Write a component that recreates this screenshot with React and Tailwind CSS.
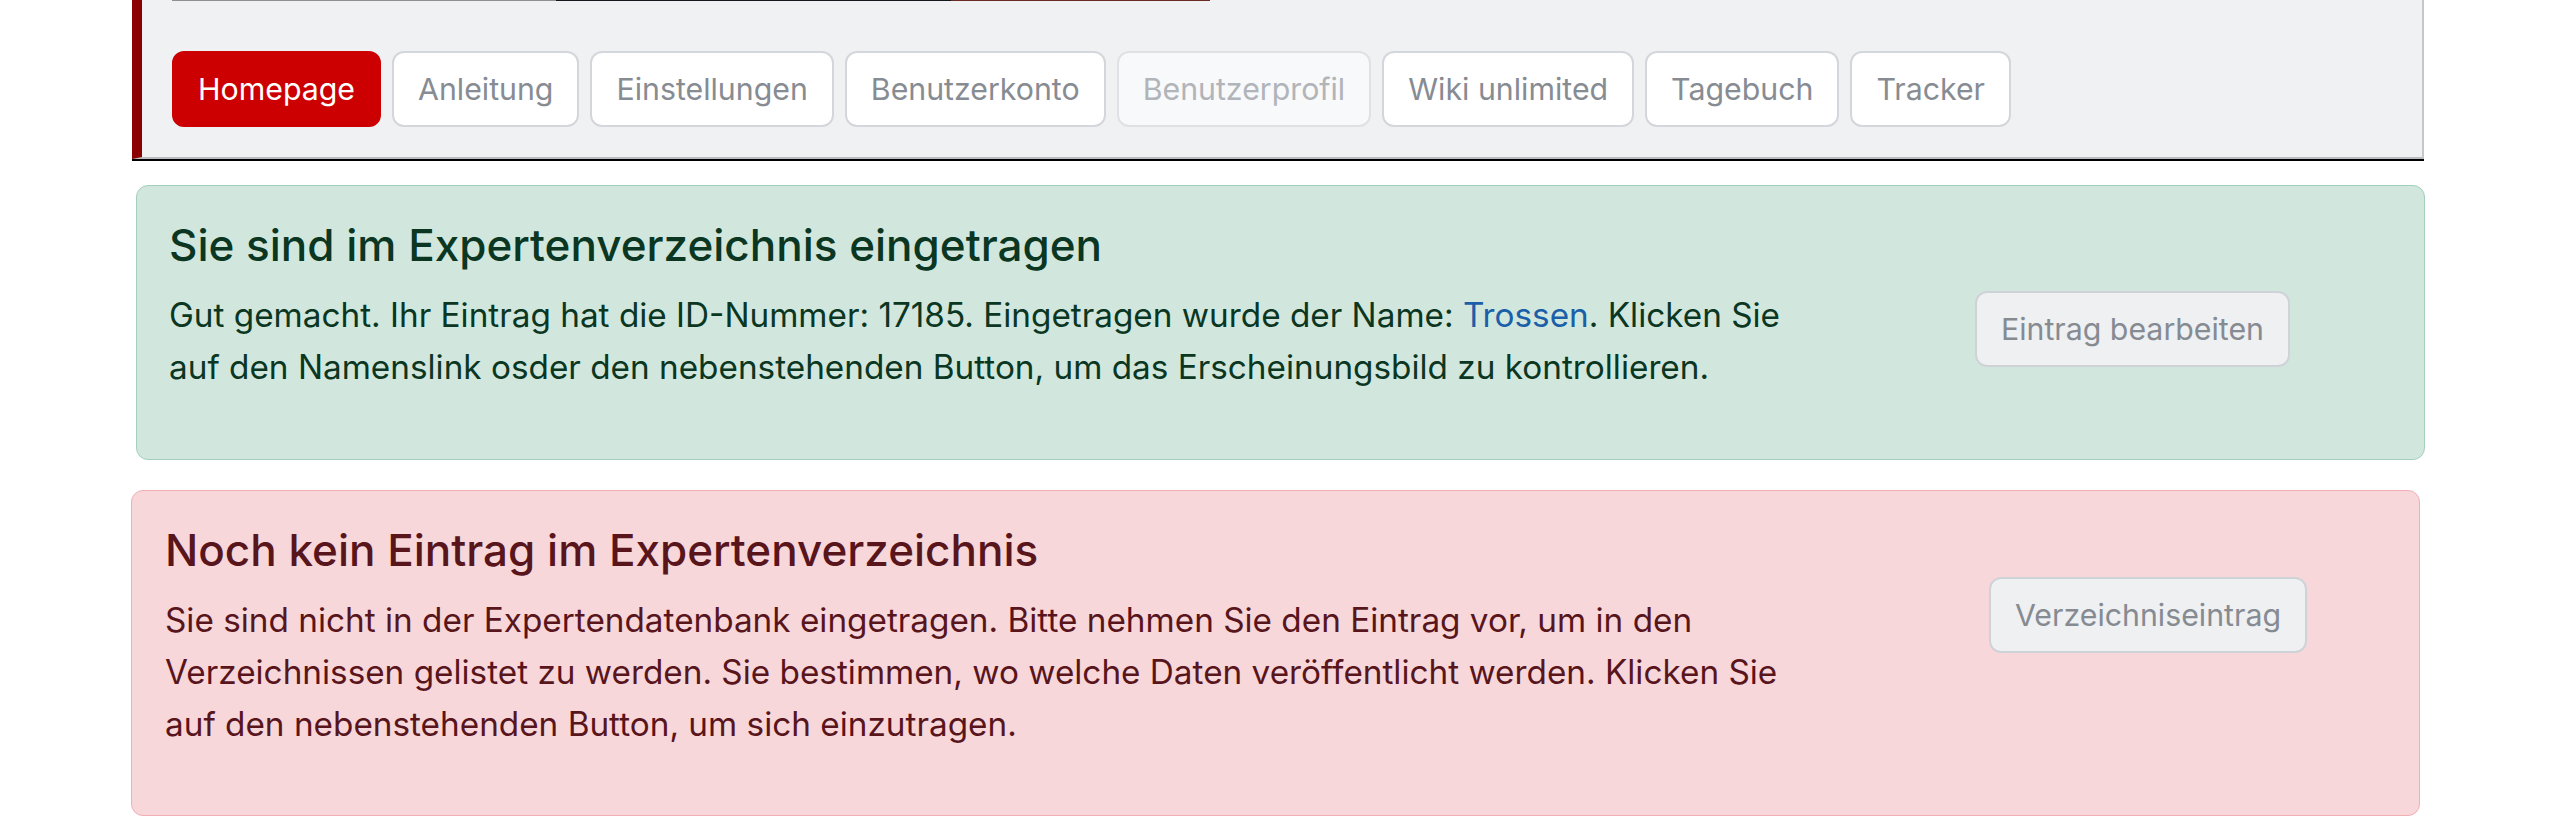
import React from 'react';

const navItems = [
	{label: 'Homepage', kind: 'active'},
	{label: 'Anleitung'},
	{label: 'Einstellungen'},
	{label: 'Benutzerkonto'},
	{label: 'Benutzerprofil', kind: 'disabled'},
	{label: 'Wiki unlimited'},
	{label: 'Tagebuch'},
	{label: 'Tracker'},
];

function NavButton({label, kind}) {
	if (kind === 'active') {
		return (
			<button className="px-[24px] py-[12px] text-[30.3px] leading-[48px] rounded-[12px] border-2 border-[#cc0000] bg-[#cc0000] text-white whitespace-nowrap">
				{label}
			</button>
		);
	}
	if (kind === 'disabled') {
		return (
			<button className="px-[24px] py-[12px] text-[30.3px] leading-[48px] rounded-[12px] border-2 border-[#dfe1e4] bg-[#f8f9fa] text-[#b1b4b9] whitespace-nowrap">
				{label}
			</button>
		);
	}
	return (
		<button className="px-[24px] py-[12px] text-[30.3px] leading-[48px] rounded-[12px] border-2 border-[#d3d6da] bg-white text-[#878c93] whitespace-nowrap">
			{label}
		</button>
	);
}

function GrayButton({children}) {
	return (
		<button className="px-[24px] py-[12px] text-[30.3px] leading-[48px] rounded-[12px] border-2 border-[#cfd3d8] bg-[#eef0f2] text-[#868b92] whitespace-nowrap">
			{children}
		</button>
	);
}

export default function App() {
	return (
		<div
			className="w-[2573px] h-[831px] bg-white overflow-hidden"
			style={{fontFamily: 'Inter, "Noto Sans", "Liberation Sans", sans-serif'}}
		>
			{/* top toolbar panel */}
			<div className="ml-[132px] w-[2292px] border-b-2 border-black">
				<div className="bg-[#f0f1f3] border-l-[10px] border-l-[#8b0000] border-r-2 border-r-[#c4c7cc] border-b-2 border-b-[#b9bcc1] pl-[30px] pb-[30px]">
					<div className="flex h-[1px] w-[1038px]">
						<div className="w-[384px] bg-[#8e9094]" />
						<div className="w-[395px] bg-[#15171c]" />
						<div className="w-[259px] bg-[#6b2a22]" />
					</div>
					<div className="mt-[50px] flex gap-[11px]">
						{navItems.map((item, i) => (
							<NavButton key={i} label={item.label} kind={item.kind} />
						))}
					</div>
				</div>
			</div>

			{/* success alert */}
			<div className="ml-[136px] mt-[24px] w-[2289px] h-[275px] rounded-[12px] border border-[#a3cfbb] bg-[#d1e7dd] text-[#0a3622] pl-[32px] pr-[32px] pt-[30px] flex">
				<div className="flex-1">
					<h4 className="text-[44px] leading-[58px] font-medium">Sie sind im Expertenverzeichnis eingetragen</h4>
					<p className="mt-[15px] text-[33.3px] leading-[52px]">
						Gut gemacht. Ihr Eintrag hat die ID-Nummer: 17185. Eingetragen wurde der Name: <a className="text-[#1a5fa8]">Trossen</a>. Klicken Sie
						<br />
						auf den Namenslink osder den nebenstehenden Button, um das Erscheinungsbild zu kontrollieren.
					</p>
				</div>
				<div className="mt-[75px] mr-[102px]">
					<GrayButton>Eintrag bearbeiten</GrayButton>
				</div>
			</div>

			{/* missing entry alert */}
			<div className="ml-[131px] mt-[30px] w-[2289px] h-[326px] rounded-[12px] border border-[#f1aeb5] bg-[#f8d7da] text-[#58151c] pl-[33px] pr-[33px] pt-[30px] flex">
				<div className="flex-1">
					<h4 className="text-[44px] leading-[58px] font-medium">Noch kein Eintrag im Expertenverzeichnis</h4>
					<p className="mt-[15px] text-[33.3px] leading-[52px]">
						Sie sind nicht in der Expertendatenbank eingetragen. Bitte nehmen Sie den Eintrag vor, um in den
						<br />
						Verzeichnissen gelistet zu werden. Sie bestimmen, wo welche Daten veröffentlicht werden. Klicken Sie
						<br />
						auf den nebenstehenden Button, um sich einzutragen.
					</p>
				</div>
				<div className="mt-[56px] mr-[79px]">
					<GrayButton>Verzeichniseintrag</GrayButton>
				</div>
			</div>
		</div>
	);
}
